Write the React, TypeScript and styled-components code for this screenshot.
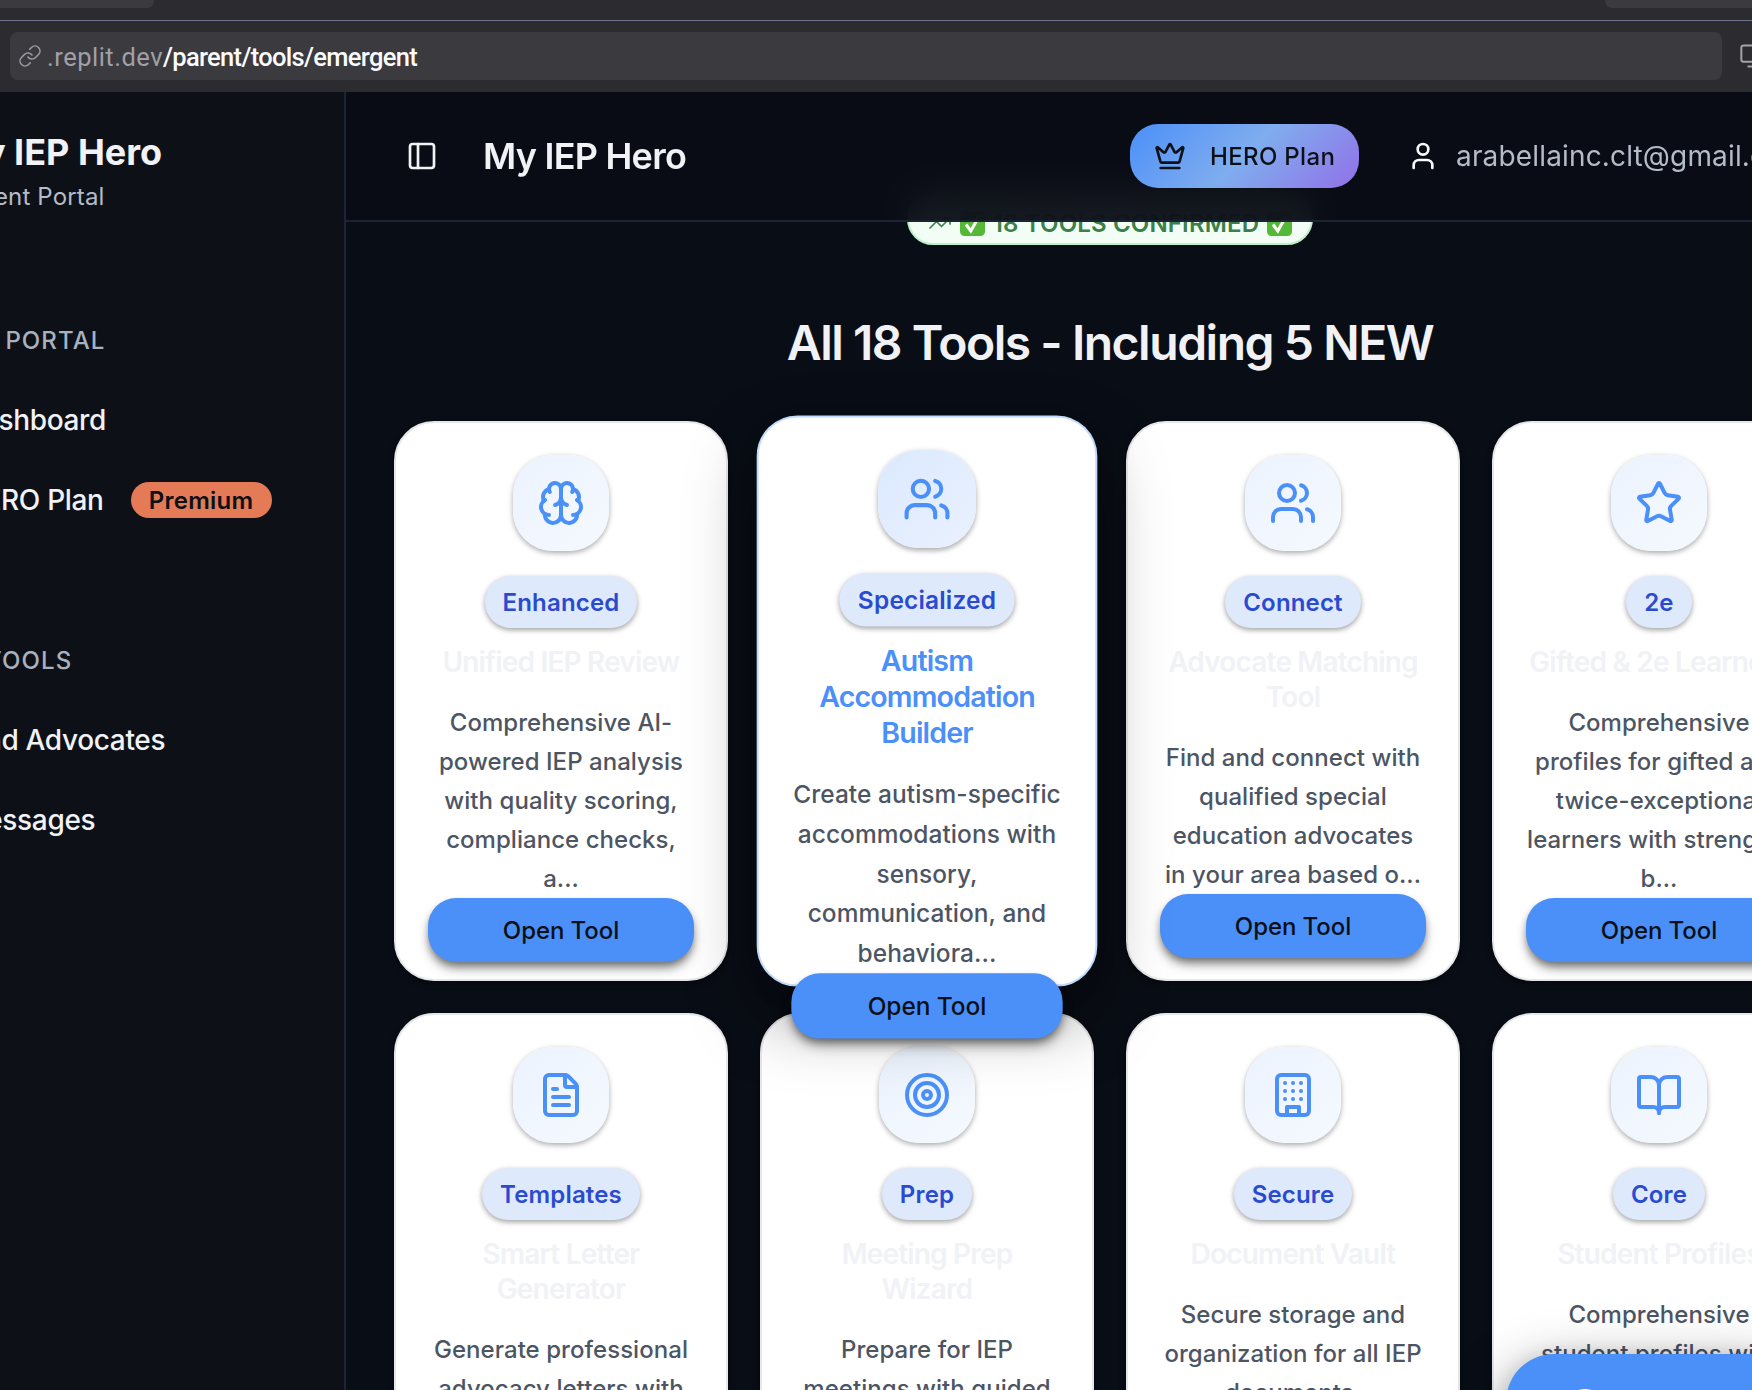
import React from 'react';
import styled, { createGlobalStyle, css } from 'styled-components';
import {
  BookOpen,
  Brain,
  Crown,
  FileText,
  Link,
  Monitor,
  PanelLeft,
  Star,
  Target,
  TrendingUp,
  User,
  Users,
  MessageCircle,
} from 'lucide-react';

const Global = createGlobalStyle`
  *, *::before, *::after { box-sizing: border-box; }
  body {
    margin: 0;
    background: #090d15;
    overflow: hidden;
    font-family: Inter, "Liberation Sans", sans-serif;
    letter-spacing: 0.01em;
  }
  h1, h2, h3, p { margin: 0; }
  button { font-family: inherit; border: 0; }
`;

const Window = styled.div`
  display: flex;
  flex-direction: column;
  width: 1752px;
  height: 1390px;
  overflow: hidden;
`;

/* Browser chrome */
const TabStrip = styled.div`
  display: flex;
  justify-content: space-between;
  height: 21px;
  flex: none;
  background: #2b2b30;
  border-bottom: 1px solid #6e7390;
`;

const Tab = styled.div<{ $side: 'left' | 'right' }>`
  width: ${(p) => (p.$side === 'left' ? 154 : 147)}px;
  height: 8px;
  background: #3a3a3f;
  border-radius: ${(p) => (p.$side === 'left' ? '0 0 7px 0' : '0 0 0 7px')};
`;

const Toolbar = styled.div`
  display: flex;
  align-items: center;
  gap: 17px;
  height: 71px;
  flex: none;
  padding: 0 0 1px 10px;
  background: #2b2b30;
  color: #a3a3a8;
  svg { flex: none; }
`;

const AddressBar = styled.div`
  display: flex;
  align-items: center;
  width: 1712px;
  height: 48px;
  flex: none;
  padding-left: 8px;
  border-radius: 8px;
  background: #3a3a3f;
  font-family: Roboto, "Noto Sans", sans-serif;
  font-size: 25.5px;
  color: #fbfbfe;
`;

const Host = styled.span`
  margin-left: 5px;
  padding-top: 2px;
  letter-spacing: 0.5px;
  color: #a0a0a6;
`;

const Path = styled.span`
  padding-top: 2px;
  font-weight: 500;
  letter-spacing: -0.68px;
`;

/* App shell */
const Shell = styled.div`
  display: flex;
  flex: 1;
  min-height: 0;
`;

const Sidebar = styled.aside`
  width: 346px;
  flex: none;
  overflow: hidden;
  border-right: 2px solid #1c2436;
  background: #0d1117;
  color: #f1f2f6;
  white-space: nowrap;
`;

const Brand = styled.div`
  padding-top: 38px;
  margin-left: -50px;
`;

const BrandName = styled.h2`
  font-size: 36px;
  line-height: 45px;
  font-weight: 700;
  letter-spacing: 0;
`;

const BrandSub = styled.p`
  margin-top: 6px;
  margin-left: 6px;
  font-size: 24px;
  line-height: 32px;
  color: #b4bcc8;
`;

const NavLabel = styled.div<{ $top: number; $shift: number }>`
  margin-top: ${(p) => p.$top}px;
  margin-left: ${(p) => p.$shift}px;
  font-size: 24px;
  line-height: 32px;
  font-weight: 500;
  letter-spacing: 0.045em;
  color: #a9b1be;
`;

const NavList = styled.nav`
  display: flex;
  flex-direction: column;
  padding-top: 23px;
`;

const NavItem = styled.a<{ $shift: number }>`
  display: flex;
  align-items: center;
  height: 80px;
  gap: 27px;
  margin-left: ${(p) => p.$shift}px;
  font-size: 28px;
  font-weight: 500;
  letter-spacing: -0.012em;
`;

const PremiumBadge = styled.span`
  display: flex;
  align-items: center;
  justify-content: center;
  width: 141px;
  height: 36px;
  border-radius: 18px;
  background: #e47b56;
  color: #0d1117;
  font-size: 24px;
  font-weight: 600;
  letter-spacing: 0.01em;
`;

const Main = styled.main`
  display: flex;
  flex-direction: column;
  flex: 1;
  min-width: 0;
  background: #090d15;
`;

const Header = styled.header`
  display: flex;
  align-items: center;
  position: relative;
  z-index: 20;
  height: 130px;
  flex: none;
  padding-left: 60px;
  border-bottom: 2px solid #1c2434;
  background: rgba(9, 13, 21, 0.95);
  backdrop-filter: blur(16px);
  color: #f1f2f6;
  white-space: nowrap;
  svg { flex: none; }
`;

const HeaderTitle = styled.h1`
  flex: none;
  margin-left: 45px;
  width: 647px;
  font-size: 36px;
  font-weight: 600;
  letter-spacing: -0.021em;
`;

const HeroButton = styled.button`
  display: flex;
  align-items: center;
  gap: 24px;
  width: 229px;
  height: 64px;
  flex: none;
  padding: 0 0 0 24px;
  border-radius: 28px;
  background: linear-gradient(135deg, #4b8ff9 0%, #7fadee 50%, #9270e8 100%);
  color: #0d1117;
  font-size: 24px;
  font-weight: 550;
  letter-spacing: 0.014em;
`;

const Account = styled.div`
  display: flex;
  align-items: center;
  flex: none;
  gap: 17px;
  margin-left: 48px;
  font-size: 28px;
  color: #b4bcc8;
  svg { color: #f8f9fb; }
`;

const Content = styled.div`
  display: flex;
  flex-direction: column;
  align-items: center;
  width: 1432px;
  margin-left: 48px;
  margin-top: -29px;
`;

const ConfirmPill = styled.div`
  display: flex;
  align-items: center;
  justify-content: center;
  gap: 8px;
  width: 406px;
  height: 52px;
  flex: none;
  padding-top: 8px;
  border: 2px solid #bbf0cb;
  border-radius: 26px;
  background: #f2fdf5;
  color: #3b8048;
  font-size: 24px;
  font-weight: 600;
  white-space: nowrap;
`;

const SectionTitle = styled.h2`
  margin-top: 66px;
  height: 110px;
  font-size: 48px;
  line-height: 64px;
  font-weight: 600;
  letter-spacing: -0.0305em;
  color: #f1f2f6;
  white-space: nowrap;
`;

const Grid = styled.div`
  display: grid;
  grid-template-columns: repeat(4, 334px);
  grid-auto-rows: 560px;
  gap: 32px;
`;

const IconTile = styled.div<{ $active: boolean }>`
  display: flex;
  align-items: center;
  justify-content: center;
  width: 96px;
  height: 96px;
  flex: none;
  border-radius: 40px;
  background: ${(p) =>
    p.$active
      ? 'linear-gradient(135deg, #dbe9fe, #eaf1fe)'
      : 'linear-gradient(135deg, #ecf3fe, #f5f9ff)'};
  box-shadow: 0 2px 6px rgba(0, 0, 0, 0.2), 0 2px 4px rgba(0, 0, 0, 0.16);
  color: #4a90f8;
`;

const Tag = styled.span`
  display: flex;
  align-items: center;
  height: 52px;
  flex: none;
  margin-top: 25px;
  padding: 0 18px;
  border-radius: 26px;
  background: #dee9fc;
  box-shadow: 0 2px 6px rgba(0, 0, 0, 0.22), 0 2px 4px rgba(0, 0, 0, 0.18);
  color: #2a4bd0;
  font-size: 24px;
  font-weight: 600;
  letter-spacing: 0.007em;
`;

const CardTitle = styled.h3<{ $active: boolean }>`
  margin-top: 17px;
  font-size: 28px;
  line-height: 35px;
  font-weight: 600;
  letter-spacing: -0.029em;
  text-align: center;
  white-space: pre;
  color: ${(p) => (p.$active ? '#4a90f8' : '#f1f2f6')};
`;

const CardText = styled.p`
  margin-top: 23px;
  font-size: 24px;
  line-height: 39px;
  font-weight: 450;
  letter-spacing: 0.002em;
  text-align: center;
  white-space: pre;
  color: #4c5563;
`;

const OpenButton = styled.button`
  align-self: stretch;
  height: 64px;
  flex: none;
  border-radius: 28px;
  background: #4a90f8;
  box-shadow: 0 8px 12px -2px rgba(0, 0, 0, 0.38), 0 4px 8px -2px rgba(0, 0, 0, 0.4);
  color: #0b0f17;
  font-size: 24px;
  font-weight: 500;
  letter-spacing: -0.003em;
`;

const Card = styled.article<{ $active: boolean }>`
  display: flex;
  flex-direction: column;
  align-items: center;
  padding: 32px;
  border: 2px solid #e5e7eb;
  border-radius: 40px;
  background: #fff;
  box-shadow: 0 2px 6px rgba(0, 0, 0, 0.5);
  ${(p) =>
    p.$active &&
    css`
      position: relative;
      z-index: 5;
      transform: scale(1.02);
      border-color: #bfdbfe;
      box-shadow: 0 32px 68px rgba(0, 0, 0, 0.38), 0 8px 20px rgba(0, 0, 0, 0.1);
    `}
`;

const ChatButton = styled.button`
  position: fixed;
  left: 1506px;
  top: 1354px;
  z-index: 30;
  display: flex;
  align-items: center;
  width: 300px;
  height: 112px;
  padding: 1px 0 0 55px;
  border-radius: 48px;
  background: #4a90f8;
  box-shadow: 0 16px 56px rgba(0, 0, 0, 0.45), 0 4px 24px rgba(0, 0, 0, 0.15);
  color: #fff;
`;

const CheckMark = () => (
  <svg width="25" height="25" viewBox="0 0 25 25" fill="none">
    <rect width="25" height="25" rx="4.5" fill="#55b837" />
    <path d="M6 13.5 10.8 20 19.5 4.5" stroke="#fff" strokeWidth="3" />
  </svg>
);

const Building = () => (
  <svg
    width="48"
    height="48"
    viewBox="0 0 24 24"
    fill="none"
    stroke="currentColor"
    strokeWidth="2"
    strokeLinecap="round"
    strokeLinejoin="round"
  >
    <rect x="4" y="2" width="16" height="20" rx="2" />
    <path d="M9 22v-4h6v4M8 6h.01M16 6h.01M12 6h.01M12 10h.01M12 14h.01M16 10h.01M16 14h.01M8 10h.01M8 14h.01" />
  </svg>
);

type Tool = {
  icon: React.ComponentType<{ size?: number }>;
  tag: string;
  title: string;
  text: string;
  active?: boolean;
};

const tools: Tool[] = [
  {
    icon: Brain,
    tag: 'Enhanced',
    title: 'Unified IEP Review',
    text: 'Comprehensive AI-\npowered IEP analysis\nwith quality scoring,\ncompliance checks,\na...',
  },
  {
    icon: Users,
    tag: 'Specialized',
    title: 'Autism\nAccommodation\nBuilder',
    text: 'Create autism-specific\naccommodations with\nsensory,\ncommunication, and\nbehaviora...',
    active: true,
  },
  {
    icon: Users,
    tag: 'Connect',
    title: 'Advocate Matching\nTool',
    text: 'Find and connect with\nqualified special\neducation advocates\nin your area based o...',
  },
  {
    icon: Star,
    tag: '2e',
    title: 'Gifted & 2e Learners',
    text: 'Comprehensive\nprofiles for gifted and\ntwice-exceptional\nlearners with strength-\nb...',
  },
  {
    icon: FileText,
    tag: 'Templates',
    title: 'Smart Letter\nGenerator',
    text: 'Generate professional\nadvocacy letters with',
  },
  {
    icon: Target,
    tag: 'Prep',
    title: 'Meeting Prep\nWizard',
    text: 'Prepare for IEP\nmeetings with guided',
  },
  {
    icon: Building,
    tag: 'Secure',
    title: 'Document Vault',
    text: 'Secure storage and\norganization for all IEP\ndocuments,',
  },
  {
    icon: BookOpen,
    tag: 'Core',
    title: 'Student Profiles',
    text: 'Comprehensive\nstudent profiles with',
  },
];

const ToolCard = ({ icon: Icon, tag, title, text, active = false }: Tool) => (
  <Card $active={active}>
    <IconTile $active={active}>
      <Icon size={48} />
    </IconTile>
    <Tag>{tag}</Tag>
    <CardTitle $active={active}>{title}</CardTitle>
    <CardText>{text}</CardText>
    <OpenButton>Open Tool</OpenButton>
  </Card>
);

export default function App() {
  return (
    <Window>
      <Global />
      <TabStrip>
        <Tab $side="left" />
        <Tab $side="right" />
      </TabStrip>
      <Toolbar>
        <AddressBar>
          <Link size={24} strokeWidth={1.6} color="#9a9aa0" />
          <Host>.replit.dev</Host>
          <Path>/parent/tools/emergent</Path>
        </AddressBar>
        <Monitor size={28} strokeWidth={1.7} />
      </Toolbar>
      <Shell>
        <Sidebar>
          <Brand>
            <BrandName>My IEP Hero</BrandName>
            <BrandSub>Parent Portal</BrandSub>
          </Brand>
          <NavLabel $top={112} $shift={-103}>PARENT PORTAL</NavLabel>
          <NavList>
            <NavItem $shift={-37}>Dashboard</NavItem>
            <NavItem $shift={-36}>
              HERO Plan
              <PremiumBadge>Premium</PremiumBadge>
            </NavItem>
          </NavList>
          <NavLabel $top={105} $shift={-14}>TOOLS</NavLabel>
          <NavList>
            <NavItem $shift={-38}>Find Advocates</NavItem>
            <NavItem $shift={-39}>Messages</NavItem>
          </NavList>
        </Sidebar>
        <Main>
          <Header>
            <PanelLeft size={32} />
            <HeaderTitle>My IEP Hero</HeaderTitle>
            <HeroButton>
              <Crown size={32} />
              HERO Plan
            </HeroButton>
            <Account>
              <User size={32} />
              arabellainc.clt@gmail.com
            </Account>
          </Header>
          <Content>
            <ConfirmPill>
              <TrendingUp size={24} strokeWidth={1.7} />
              <CheckMark />
              18 TOOLS CONFIRMED
              <CheckMark />
            </ConfirmPill>
            <SectionTitle>All 18 Tools - Including 5 NEW</SectionTitle>
            <Grid>
              {tools.map((tool) => (
                <ToolCard key={tool.title} {...tool} />
              ))}
            </Grid>
          </Content>
        </Main>
      </Shell>
      <ChatButton>
        <MessageCircle size={48} />
      </ChatButton>
    </Window>
  );
}
